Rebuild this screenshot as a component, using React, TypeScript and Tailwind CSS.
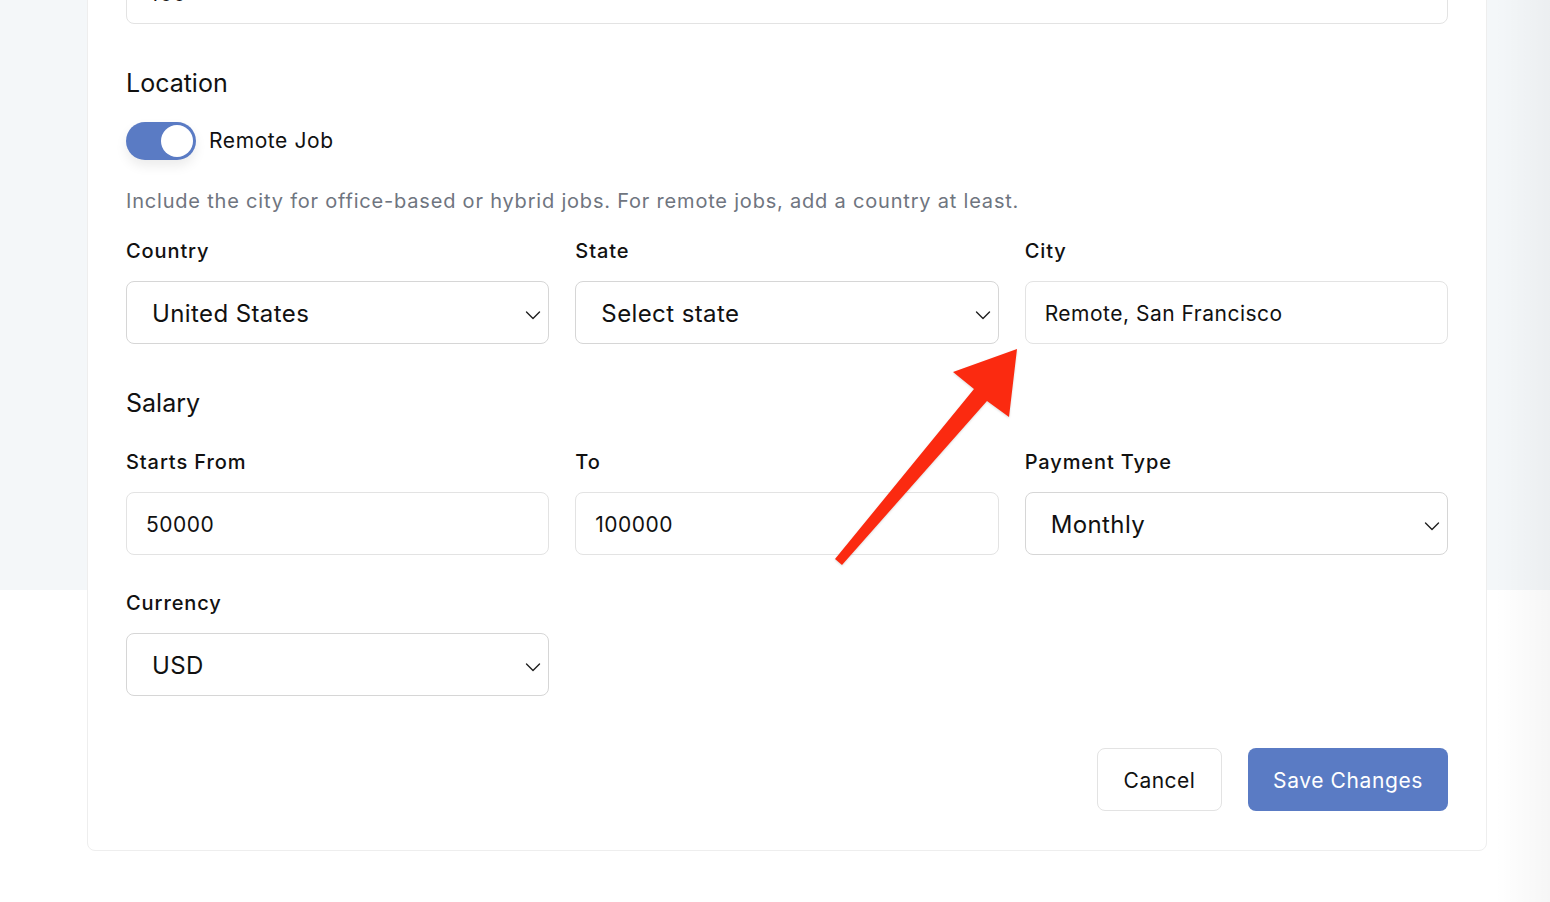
import React, { useState } from "react";

const Chevron = (): JSX.Element => (
  <svg width="16" height="10" viewBox="0 0 16 10" fill="none" className="shrink-0 mt-[2px]">
    <path d="M1.5 2l6.5 6.5L14.5 2" stroke="#1f1f1f" strokeWidth="1.4" strokeLinecap="round" strokeLinejoin="round" />
  </svg>
);

const Label = ({ children }: { children: React.ReactNode }): JSX.Element => (
  <label className="block text-[20px] leading-[28px] font-medium tracking-[0.9px] text-[#111] mb-4">{children}</label>
);

const SelectBox = ({ value }: { value: string }): JSX.Element => (
  <div className="flex items-center justify-between h-[63px] rounded-lg border border-[#d6d6d6] bg-white pl-[25px] pr-[7px] pt-[3px]">
    <span className="text-[24px] tracking-[0.4px] text-[#111]">{value}</span>
    <Chevron />
  </div>
);

const TextInput = ({ value }: { value: string }): JSX.Element => (
  <div className="flex items-center h-[63px] rounded-lg border border-[#e3e3e3] bg-white pl-[19px] pt-[3px]">
    <span className="text-[21px] tracking-[0.5px] text-[#111]">{value}</span>
  </div>
);

const Toggle = ({ on, onChange }: { on: boolean; onChange: () => void }): JSX.Element => (
  <button
    type="button"
    onClick={onChange}
    className={`flex items-center w-[70px] h-[38px] rounded-full px-[3px] shadow-[0_6px_12px_rgba(0,0,0,0.08)] ${
      on ? "bg-[#5a7bc4] justify-end" : "bg-[#d1d5db] justify-start"
    }`}
  >
    <span className="block w-[32px] h-[32px] rounded-full bg-white" />
  </button>
);

export default function App(): JSX.Element {
  const [remote, setRemote] = useState<boolean>(true);

  return (
    <div
      className="relative w-[1550px] h-[902px] overflow-hidden bg-[linear-gradient(to_right,rgba(255,255,255,0)_1495px,rgba(0,0,0,0.035)_1550px),linear-gradient(to_bottom,#f4f7f9_590px,#ffffff_590px)]"
      style={{ fontFamily: "Inter, 'Noto Sans', 'Liberation Sans', sans-serif" }}
    >
      {/** Card */}
      <div className="ml-[87px] w-[1400px] -mt-[60px] bg-white border border-[#eeeeee] rounded-b-lg px-[38px] pt-[20px] pb-[39px]">
        {/** Previous field (cut off) */}
        <div className="flex items-end h-[63px] rounded-lg border border-[#e3e3e3] pl-[19px] pb-[18px]">
          <span className="text-[21px] leading-[22px] text-[#111]">400</span>
        </div>

        {/** Location */}
        <h2 className="mt-[43px] text-[25px] leading-[32px] text-[#111]">Location</h2>
        <div className="mt-[23px] flex items-center gap-[13px]">
          <Toggle on={remote} onChange={() => setRemote(!remote)} />
          <span className="text-[21px] tracking-[0.6px] text-[#111]">Remote Job</span>
        </div>
        <p className="mt-[27px] text-[20px] leading-[28px] tracking-[0.8px] text-[#6f7580]">
          Include the city for office-based or hybrid jobs. For remote jobs, add a country at least.
        </p>

        <div className="mt-[22px] grid grid-cols-3 gap-x-[26px]">
          <div>
            <Label>Country</Label>
            <SelectBox value="United States" />
          </div>
          <div>
            <Label>State</Label>
            <SelectBox value="Select state" />
          </div>
          <div>
            <Label>City</Label>
            <TextInput value="Remote, San Francisco" />
          </div>
        </div>

        {/** Salary */}
        <h2 className="mt-[43px] text-[25px] leading-[32px] text-[#111]">Salary</h2>
        <div className="mt-[29px] grid grid-cols-3 gap-x-[26px] gap-y-[34px]">
          <div>
            <Label>Starts From</Label>
            <TextInput value="50000" />
          </div>
          <div>
            <Label>To</Label>
            <TextInput value="100000" />
          </div>
          <div>
            <Label>Payment Type</Label>
            <SelectBox value="Monthly" />
          </div>
          <div>
            <Label>Currency</Label>
            <SelectBox value="USD" />
          </div>
        </div>

        {/** Actions */}
        <div className="mt-[52px] flex justify-end gap-[26px]">
          <button className="h-[63px] w-[125px] pt-[2px] rounded-lg border border-[#e3e3e3] bg-white text-[21px] tracking-[0.5px] text-[#111]">
            Cancel
          </button>
          <button className="h-[63px] w-[200px] pt-[2px] rounded-lg bg-[#5a7bc4] text-[21px] tracking-[0.6px] text-white">
            Save Changes
          </button>
        </div>
      </div>

      {/** Annotation arrow */}
      <svg
        className="absolute inset-0 pointer-events-none"
        width="1550"
        height="902"
        viewBox="0 0 1550 902"
      >
        <polygon
          points="835,559 974,389 953,372 1017,349 1009,417 987,401 842,565"
          fill="#fb2a10"
          style={{ filter: "drop-shadow(0 1px 1px rgba(0,0,0,0.15))" }}
        />
      </svg>
    </div>
  );
}
